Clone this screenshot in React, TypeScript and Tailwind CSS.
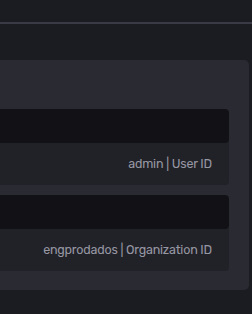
const fields = [
  { value: "admin", label: "User ID" },
  { value: "engprodados", label: "Organization ID" },
];

export default function App() {
  return (
    <div
      className="h-[314px] w-[252px] overflow-hidden bg-[#1b1c21]"
      style={{ fontFamily: "Rubik, Inter, 'Noto Sans', sans-serif" }}
    >
      <div className="h-[22px]" />
      <div className="h-[2px] bg-[#393a45]" />
      <div className="h-[36px]" />

      <div className="w-[249px] rounded-r-[5px] bg-[#292a32] pt-[49px] pb-[19px] pr-[20px]">
        <div className="flex flex-col gap-[10px]">
          {fields.map((f) => (
            <div key={f.label} className="overflow-hidden rounded-r-[4px] bg-[#212228]">
              <div className="h-[34px] rounded-r-[4px] bg-[#111116]" />
              <div className="flex h-[42px] items-center justify-end pr-[17px] text-[12.5px] tracking-[-0.2px] text-[#9797a3]">
                <span className="whitespace-pre">{`${f.value} | ${f.label}`}</span>
              </div>
            </div>
          ))}
        </div>
      </div>
    </div>
  );
}
